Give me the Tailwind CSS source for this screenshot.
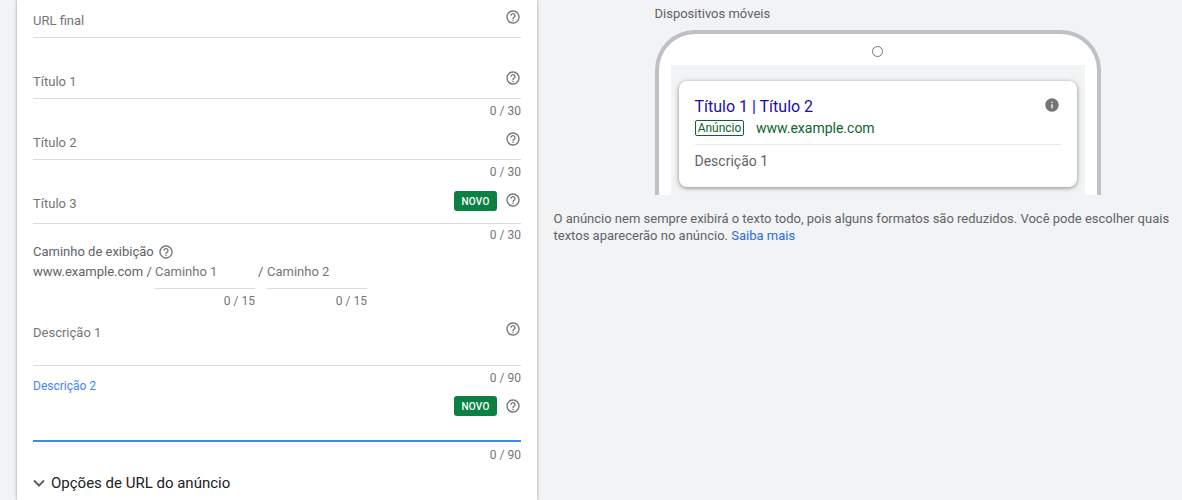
<!DOCTYPE html>
<html lang="pt">
<head>
<meta charset="utf-8">
<script src="https://cdn.jsdelivr.net/npm/@tailwindcss/browser@4"></script>
</head>
<body class="m-0 h-[500px] w-[1182px] overflow-hidden bg-[#f1f3f4] font-['Roboto',sans-serif]">
<div class="flex h-[500px] items-start">
  <!-- Form panel -->
  <div class="ml-[17px] h-[500px] w-[520px] shrink-0 bg-white px-4 text-[13px] text-[#5f6368] shadow-[0_0_3px_rgba(60,64,67,0.5)]">
    <div class="flex h-[38px] justify-between border-b border-[#dadce0] pt-[11px]">
      <span class="leading-5 text-[#757575]">URL final</span>
      <svg class="-mt-[2px] h-4 w-4" viewBox="0 0 24 24" fill="#757575"><path d="M11 18h2v-2h-2v2zm1-16C6.48 2 2 6.48 2 12s4.48 10 10 10 10-4.48 10-10S17.52 2 12 2zm0 18c-4.41 0-8-3.59-8-8s3.59-8 8-8 8 3.59 8 8-3.59 8-8 8zm0-14c-2.21 0-4 1.79-4 4h2c0-1.1.9-2 2-2s2 .9 2 2c0 2-3 1.75-3 5h2c0-2.25 3-2.5 3-5 0-2.21-1.79-4-4-4z"/></svg>
    </div>
    <div class="flex h-[61px] justify-between border-b border-[#dadce0] pt-[34px]">
      <span class="leading-5 text-[#757575]">Título 1</span>
      <svg class="-mt-[2px] h-4 w-4" viewBox="0 0 24 24" fill="#757575"><path d="M11 18h2v-2h-2v2zm1-16C6.48 2 2 6.48 2 12s4.48 10 10 10 10-4.48 10-10S17.52 2 12 2zm0 18c-4.41 0-8-3.59-8-8s3.59-8 8-8 8 3.59 8 8-3.59 8-8 8zm0-14c-2.21 0-4 1.79-4 4h2c0-1.1.9-2 2-2s2 .9 2 2c0 2-3 1.75-3 5h2c0-2.25 3-2.5 3-5 0-2.21-1.79-4-4-4z"/></svg>
    </div>
    <div class="h-[22px] pt-1 text-right text-xs leading-4 text-[#757575]">0 / 30</div>
    <div class="flex h-[39px] justify-between border-b border-[#dadce0] pt-[12px]">
      <span class="leading-5 text-[#757575]">Título 2</span>
      <svg class="-mt-[2px] h-4 w-4" viewBox="0 0 24 24" fill="#757575"><path d="M11 18h2v-2h-2v2zm1-16C6.48 2 2 6.48 2 12s4.48 10 10 10 10-4.48 10-10S17.52 2 12 2zm0 18c-4.41 0-8-3.59-8-8s3.59-8 8-8 8 3.59 8 8-3.59 8-8 8zm0-14c-2.21 0-4 1.79-4 4h2c0-1.1.9-2 2-2s2 .9 2 2c0 2-3 1.75-3 5h2c0-2.25 3-2.5 3-5 0-2.21-1.79-4-4-4z"/></svg>
    </div>
    <div class="h-[22px] pt-1 text-right text-xs leading-4 text-[#757575]">0 / 30</div>
    <div class="flex h-[42px] justify-between border-b border-[#dadce0] pt-[12px]">
      <span class="leading-5 text-[#757575]">Título 3</span>
      <div class="-mt-[3px] flex items-start gap-2">
        <span class="flex h-5 w-[43px] items-center justify-center rounded-[3px] bg-[#0b8043] text-[10px] font-medium tracking-[0.2px] text-white">NOVO</span>
        <svg class="mt-[1px] h-4 w-4" viewBox="0 0 24 24" fill="#757575"><path d="M11 18h2v-2h-2v2zm1-16C6.48 2 2 6.48 2 12s4.48 10 10 10 10-4.48 10-10S17.52 2 12 2zm0 18c-4.41 0-8-3.59-8-8s3.59-8 8-8 8 3.59 8 8-3.59 8-8 8zm0-14c-2.21 0-4 1.79-4 4h2c0-1.1.9-2 2-2s2 .9 2 2c0 2-3 1.75-3 5h2c0-2.25 3-2.5 3-5 0-2.21-1.79-4-4-4z"/></svg>
      </div>
    </div>
    <div class="h-[19px] pt-[3px] text-right text-xs leading-4 text-[#757575]">0 / 30</div>
    <div class="flex h-[18px] items-center gap-[5px] leading-[18px]">
      <span>Caminho de exibição</span>
      <svg class="h-4 w-4 -ml-[1px]" viewBox="0 0 24 24" fill="#757575"><path d="M11 18h2v-2h-2v2zm1-16C6.48 2 2 6.48 2 12s4.48 10 10 10 10-4.48 10-10S17.52 2 12 2zm0 18c-4.41 0-8-3.59-8-8s3.59-8 8-8 8 3.59 8 8-3.59 8-8 8zm0-14c-2.21 0-4 1.79-4 4h2c0-1.1.9-2 2-2s2 .9 2 2c0 2-3 1.75-3 5h2c0-2.25 3-2.5 3-5 0-2.21-1.79-4-4-4z"/></svg>
    </div>
    <div class="flex h-[48px] pt-[1px] leading-5">
      <span class="w-[122px] shrink-0">www.example.com /</span>
      <div class="w-[100px] shrink-0">
        <div class="h-[27px] border-b border-[#dadce0] text-[#757575]">Caminho 1</div>
        <div class="pt-1 text-right text-xs leading-4 text-[#757575]">0 / 15</div>
      </div>
      <span class="ml-[3px] w-[9px] shrink-0">/</span>
      <div class="w-[100px] shrink-0">
        <div class="h-[27px] border-b border-[#dadce0] text-[#757575]">Caminho 2</div>
        <div class="pt-1 text-right text-xs leading-4 text-[#757575]">0 / 15</div>
      </div>
    </div>
    <div class="flex h-[57px] justify-between border-b border-[#dadce0] pt-[14px]">
      <span class="leading-5 text-[#757575]">Descrição 1</span>
      <svg class="-mt-[2px] h-4 w-4" viewBox="0 0 24 24" fill="#757575"><path d="M11 18h2v-2h-2v2zm1-16C6.48 2 2 6.48 2 12s4.48 10 10 10 10-4.48 10-10S17.52 2 12 2zm0 18c-4.41 0-8-3.59-8-8s3.59-8 8-8 8 3.59 8 8-3.59 8-8 8zm0-14c-2.21 0-4 1.79-4 4h2c0-1.1.9-2 2-2s2 .9 2 2c0 2-3 1.75-3 5h2c0-2.25 3-2.5 3-5 0-2.21-1.79-4-4-4z"/></svg>
    </div>
    <div class="flex h-[28px] items-start justify-between text-xs leading-4">
      <span class="mt-3 text-[#4285f4]">Descrição 2</span>
      <span class="mt-1 text-[#757575]">0 / 90</span>
    </div>
    <div class="flex h-[48px] justify-end gap-2 border-b-2 border-[#4285f4] pt-[2px]">
      <span class="flex h-5 w-[43px] items-center justify-center rounded-[3px] bg-[#0b8043] text-[10px] font-medium tracking-[0.2px] text-white">NOVO</span>
      <svg class="mt-[2px] h-4 w-4" viewBox="0 0 24 24" fill="#757575"><path d="M11 18h2v-2h-2v2zm1-16C6.48 2 2 6.48 2 12s4.48 10 10 10 10-4.48 10-10S17.52 2 12 2zm0 18c-4.41 0-8-3.59-8-8s3.59-8 8-8 8 3.59 8 8-3.59 8-8 8zm0-14c-2.21 0-4 1.79-4 4h2c0-1.1.9-2 2-2s2 .9 2 2c0 2-3 1.75-3 5h2c0-2.25 3-2.5 3-5 0-2.21-1.79-4-4-4z"/></svg>
    </div>
    <div class="pt-[5px] text-right text-xs leading-4 text-[#757575]">0 / 90</div>
    <div class="mt-[10px] flex items-center text-[15px] leading-5 text-[#202124]">
      <svg class="h-[18px] w-[18px] shrink-0 -ml-[3px]" viewBox="0 0 18 18" fill="none" stroke="#5f6368" stroke-width="2"><path d="M4 6.5l5 5 5-5"/></svg>
      <span class="ml-[3px]">Opções de URL do anúncio</span>
    </div>
  </div>

  <!-- Preview -->
  <div class="w-[645px] shrink-0 pl-[17px] pt-[5px] text-[13px] text-[#5f6368]">
    <div class="ml-[100.5px] mt-[1px] leading-4">Dispositivos móveis</div>
    <div class="ml-[101px] mt-[8px] h-[165px] w-[446px] overflow-hidden rounded-t-[40px] border-x-4 border-t-4 border-[#bdc1c6] bg-white px-3">
      <div class="flex h-[31px] items-center justify-center pt-[3px] pr-[2px]">
        <span class="h-[11px] w-[11px] rounded-full border border-[#757575]"></span>
      </div>
      <div class="h-[130px] bg-[#f1f3f4] p-2 pt-4">
        <div class="h-[106px] rounded-lg bg-white pl-[15.5px] pr-4 pt-4 shadow-[0_1px_4px_rgba(60,64,67,0.6)]">
          <div class="flex items-start justify-between">
            <span class="text-base leading-5 text-[#1a0dab]">Título 1 | Título 2</span>
            <svg class="mr-[1px] h-4 w-4" viewBox="0 0 24 24" fill="#757575"><path d="M12 2C6.48 2 2 6.48 2 12s4.48 10 10 10 10-4.48 10-10S17.52 2 12 2zm1 15h-2v-6h2v6zm0-8h-2V7h2v2z"/></svg>
          </div>
          <div class="mt-[3px] flex h-4 items-center">
            <span class="ml-[0.5px] flex h-4 w-[49px] items-center justify-center rounded-[2px] border border-[#0d652d] text-xs leading-none text-[#0d652d]">Anúncio</span>
            <span class="-mt-[1px] ml-3 text-sm leading-4 text-[#0d652d]">www.example.com</span>
          </div>
          <div class="mt-2 border-t border-[#e8eaed] pt-[6px] text-sm leading-5">Descrição 1</div>
        </div>
      </div>
    </div>
    <p class="-ml-[0.5px] mt-[15px] leading-[17px]">O anúncio nem sempre exibirá o texto todo, pois alguns formatos são reduzidos. Você pode escolher quais textos aparecerão no anúncio. <a class="text-[#2b6de0]">Saiba mais</a></p>
  </div>
</div>
</body>
</html>
